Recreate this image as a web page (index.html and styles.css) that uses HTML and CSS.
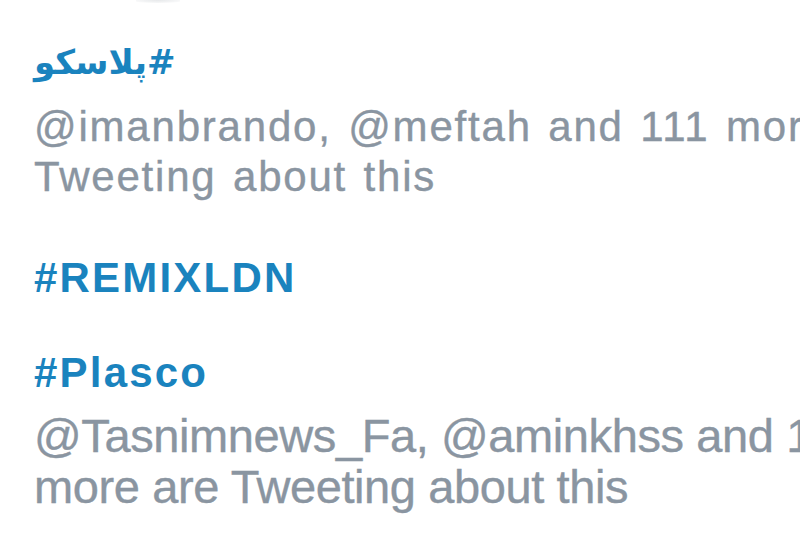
FILE: index.html
```html
<!DOCTYPE html>
<html lang="en">
<head>
<meta charset="utf-8">
<title>Trends</title>
<link rel="stylesheet" href="styles.css">
</head>
<body>
<div class="page">
  <div class="edge-shadow"></div>
  <ul class="trends">
    <li class="trend">
      <a class="tag tag-fa" href="#"><span dir="rtl">#پلاسکو</span></a>
      <p class="desc">
        <span class="line">@imanbrando, @meftah and 111 more are</span>
        <span class="line">Tweeting about this</span>
      </p>
    </li>
    <li class="trend">
      <a class="tag" href="#">#REMIXLDN</a>
    </li>
    <li class="trend">
      <a class="tag" href="#">#Plasco</a>
      <p class="desc desc-tall">
        <span class="line">@Tasnimnews_Fa, @aminkhss and 104</span>
        <span class="line">more are Tweeting about this</span>
      </p>
    </li>
  </ul>
</div>
</body>
</html>
```
FILE: styles.css
```css
html, body {
  margin: 0;
  padding: 0;
  background: #ffffff;
  overflow: hidden;
}

.page {
  width: 800px;
  height: 557px;
  overflow: hidden;
  font-family: "Liberation Sans", Arial, sans-serif;
}

.edge-shadow {
  width: 44px;
  height: 3px;
  margin-left: 136px;
  border-radius: 0 0 50% 50%;
  background: radial-gradient(ellipse at 50% 0%, #e6e8ea 0%, #f3f4f5 55%, rgba(255,255,255,0) 100%);
}

.trends {
  list-style: none;
  margin: 34px 0 0 0;
  padding: 0 0 0 34px;
  display: flex;
  flex-direction: column;
  gap: 45px;
}

.trend {
  display: flex;
  flex-direction: column;
  white-space: nowrap;
}

.tag {
  display: block;
  font-size: 42px;
  line-height: 50px;
  font-weight: bold;
  letter-spacing: 2.2px;
  color: #1a83be;
  text-decoration: none;
}

.tag-fa {
  font-family: "DejaVu Sans", "Liberation Sans", sans-serif;
  letter-spacing: 0;
  font-size: 34px;
}

.desc {
  margin: 15px 0 6px 0;
  color: #8a95a1;
  font-size: 42px;
  line-height: 50px;
  letter-spacing: 1.8px;
  word-spacing: 3px;
  -webkit-text-stroke: 0.4px #8a95a1;
}

.desc-tall {
  margin-top: 12px;
  font-size: 47px;
  line-height: 51px;
  letter-spacing: -0.4px;
  word-spacing: 0;
}

.line {
  display: block;
}
```
